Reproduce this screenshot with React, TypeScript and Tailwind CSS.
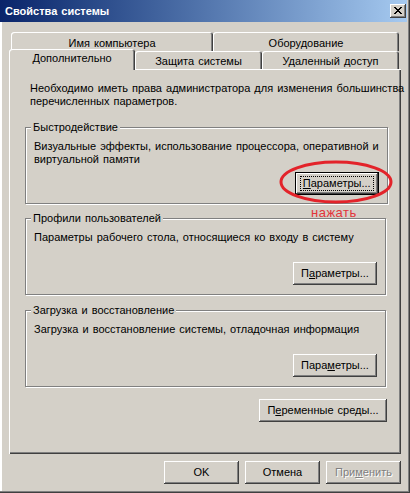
import React from "react";

const raised =
  "shadow-[inset_-1px_-1px_#404040,inset_1px_1px_#ffffff,inset_-2px_-2px_#808080]";

function Btn({
  children,
  className = "",
  def = false,
  focus = false,
  disabled = false,
}: {
  children: React.ReactNode;
  className?: string;
  def?: boolean;
  focus?: boolean;
  disabled?: boolean;
}) {
  return (
    <div
      className={`h-[23px] bg-[#d4d0c8] ${
        def ? "border border-black" : ""
      } ${className}`}
    >
      <div
        className={`w-full h-full ${raised} flex items-center justify-center whitespace-nowrap ${
          disabled ? "text-[#808080] [text-shadow:1px_1px_0_#ffffff]" : "text-black"
        }`}
      >
        {focus ? (
          <div className="border border-dotted border-black px-[2px] leading-[13px]">
            {children}
          </div>
        ) : (
          <span className="leading-[13px]">{children}</span>
        )}
      </div>
    </div>
  );
}

function CloseX() {
  const px: [number, number, number][] = [
    [0, 0, 2],
    [6, 0, 2],
    [1, 1, 2],
    [5, 1, 2],
    [2, 2, 4],
    [3, 3, 2],
    [2, 4, 4],
    [1, 5, 2],
    [5, 5, 2],
    [0, 6, 2],
    [6, 6, 2],
  ];
  return (
    <svg width="8" height="7" viewBox="0 0 8 7" shapeRendering="crispEdges">
      {px.map(([x, y, w], i) => (
        <rect key={i} x={x} y={y} width={w} height={1} fill="#000" />
      ))}
    </svg>
  );
}

function Group({
  title,
  children,
  className = "",
}: {
  title: string;
  children: React.ReactNode;
  className?: string;
}) {
  return (
    <fieldset
      className={`w-[361px] border border-[#808080] shadow-[inset_1px_1px_#ffffff,1px_1px_#ffffff] pl-[5px] pr-[8px] ${className}`}
    >
      <legend className="px-[2px] leading-[14px] bg-[#d4d0c8] relative whitespace-nowrap">
        {title}
      </legend>
      {children}
    </fieldset>
  );
}

export default function App() {
  return (
    <div className="relative w-[410px] h-[493px] bg-[#d4d0c8] overflow-hidden font-['Liberation_Sans',Arial,sans-serif] text-[11px] [word-spacing:1px] text-black shadow-[inset_-1px_-1px_#404040,inset_-2px_-2px_#808080,inset_2px_0_#ffffff]">
      {/* title bar */}
      <div className="h-[22px] mr-[3px] bg-gradient-to-r from-[#0a246a] to-[#a6caf0] flex items-center justify-between pl-[5px] pr-[1px]">
        <span className="text-white font-bold text-[11px] leading-[13px]">
          Свойства системы
        </span>
        <div
          className={`w-[16px] h-[14px] bg-[#d4d0c8] ${raised} flex items-center justify-center pr-[1px] pb-[1px]`}
        >
          <CloseX />
        </div>
      </div>

      {/* tabs */}
      <div className="mt-[10px] ml-[9px] w-[392px]">
        <div className="flex h-[19px] pl-[2px]">
          <div className="w-[202px] h-[19px] rounded-t-[3px] shadow-[inset_1px_1px_#ffffff,inset_-1px_0_#404040,inset_-2px_0_#808080] flex justify-center pt-[5px] leading-[13px] whitespace-nowrap">
            Имя компьютера
          </div>
          <div className="w-[186px] h-[19px] rounded-t-[3px] shadow-[inset_1px_1px_#ffffff,inset_-1px_0_#404040,inset_-2px_0_#808080] flex justify-center pt-[5px] leading-[13px] whitespace-nowrap">
            Оборудование
          </div>
        </div>
        <div className="flex h-[18px] items-start">
          <div className="relative z-10 -mt-[2px] w-[126px] h-[21px] bg-[#d4d0c8] rounded-t-[3px] shadow-[inset_1px_1px_#ffffff,inset_-1px_0_#404040,inset_-2px_0_#808080] flex justify-center pt-[3px] leading-[13px] whitespace-nowrap">
            Дополнительно
          </div>
          <div className="w-[127px] h-[18px] bg-[#d4d0c8] rounded-t-[3px] shadow-[inset_1px_1px_#ffffff,inset_-1px_0_#404040,inset_-2px_0_#808080] flex justify-center pt-[4px] leading-[13px] whitespace-nowrap">
            Защита системы
          </div>
          <div className="w-[137px] h-[18px] bg-[#d4d0c8] rounded-t-[3px] shadow-[inset_1px_1px_#ffffff,inset_-1px_0_#404040,inset_-2px_0_#808080] flex justify-center pt-[4px] leading-[13px] whitespace-nowrap">
            Удаленный доступ
          </div>
        </div>

        {/* panel */}
        <div className="h-[385px] shadow-[inset_1px_1px_#ffffff,inset_-1px_-1px_#404040,inset_-2px_-2px_#808080] pt-[13px] pl-[16px] flex flex-col">
          <p className="pl-[5px] leading-[13px] whitespace-nowrap">
            Необходимо иметь права администратора для изменения большинства
            <br />
            перечисленных параметров.
          </p>

          <Group title="Быстродействие" className="mt-[12px] pb-[8px]">
            <p className="pl-[3px] mt-[6px] leading-[13px] whitespace-nowrap">
              Визуальные эффекты, использование процессора, оперативной и
              <br />
              виртуальной памяти
            </p>
            <div className="flex justify-end mt-[6px]">
              <Btn def focus className="w-[84px]">
                <span className="underline">П</span>араметры...
              </Btn>
            </div>
          </Group>

          <Group title="Профили пользователей" className="mt-[7px] pb-[9px]">
            <p className="pl-[3px] mt-[6px] leading-[13px] whitespace-nowrap">
              Параметры рабочего стола, относящиеся ко входу в систему
            </p>
            <div className="flex justify-end mt-[18px]">
              <Btn className="w-[84px]">
                П<span className="underline">а</span>раметры...
              </Btn>
            </div>
          </Group>

          <Group title="Загрузка и восстановление" className="mt-[8px] pb-[9px]">
            <p className="pl-[3px] mt-[6px] leading-[13px] whitespace-nowrap">
              Загрузка и восстановление системы, отладочная информация
            </p>
            <div className="flex justify-end mt-[18px]">
              <Btn className="w-[84px]">
                Пара<span className="underline">м</span>етры...
              </Btn>
            </div>
          </Group>

          <div className="w-[362px] flex justify-end mt-[12px]">
            <Btn className="w-[128px]">
              П<span className="underline">е</span>ременные среды...
            </Btn>
          </div>
        </div>

        {/* bottom buttons */}
        <div className="flex justify-end gap-[6px] mt-[7px]">
          <Btn className="w-[75px]">OK</Btn>
          <Btn className="w-[75px]">Отмена</Btn>
          <Btn disabled className="w-[75px]">
            При<span className="underline">м</span>енить
          </Btn>
        </div>
      </div>

      {/* red annotation */}
      <svg
        className="absolute left-[278px] top-[160px] pointer-events-none"
        width="118"
        height="46"
        viewBox="0 0 118 46"
      >
        <ellipse
          cx="58"
          cy="22"
          rx="55"
          ry="20"
          fill="none"
          stroke="#e3232a"
          strokeWidth="3"
        />
      </svg>
      <div className="absolute left-[311px] top-[205px] text-[13px] leading-[15px] text-[#e3343a] tracking-[0.5px]">
        нажать
      </div>
    </div>
  );
}
